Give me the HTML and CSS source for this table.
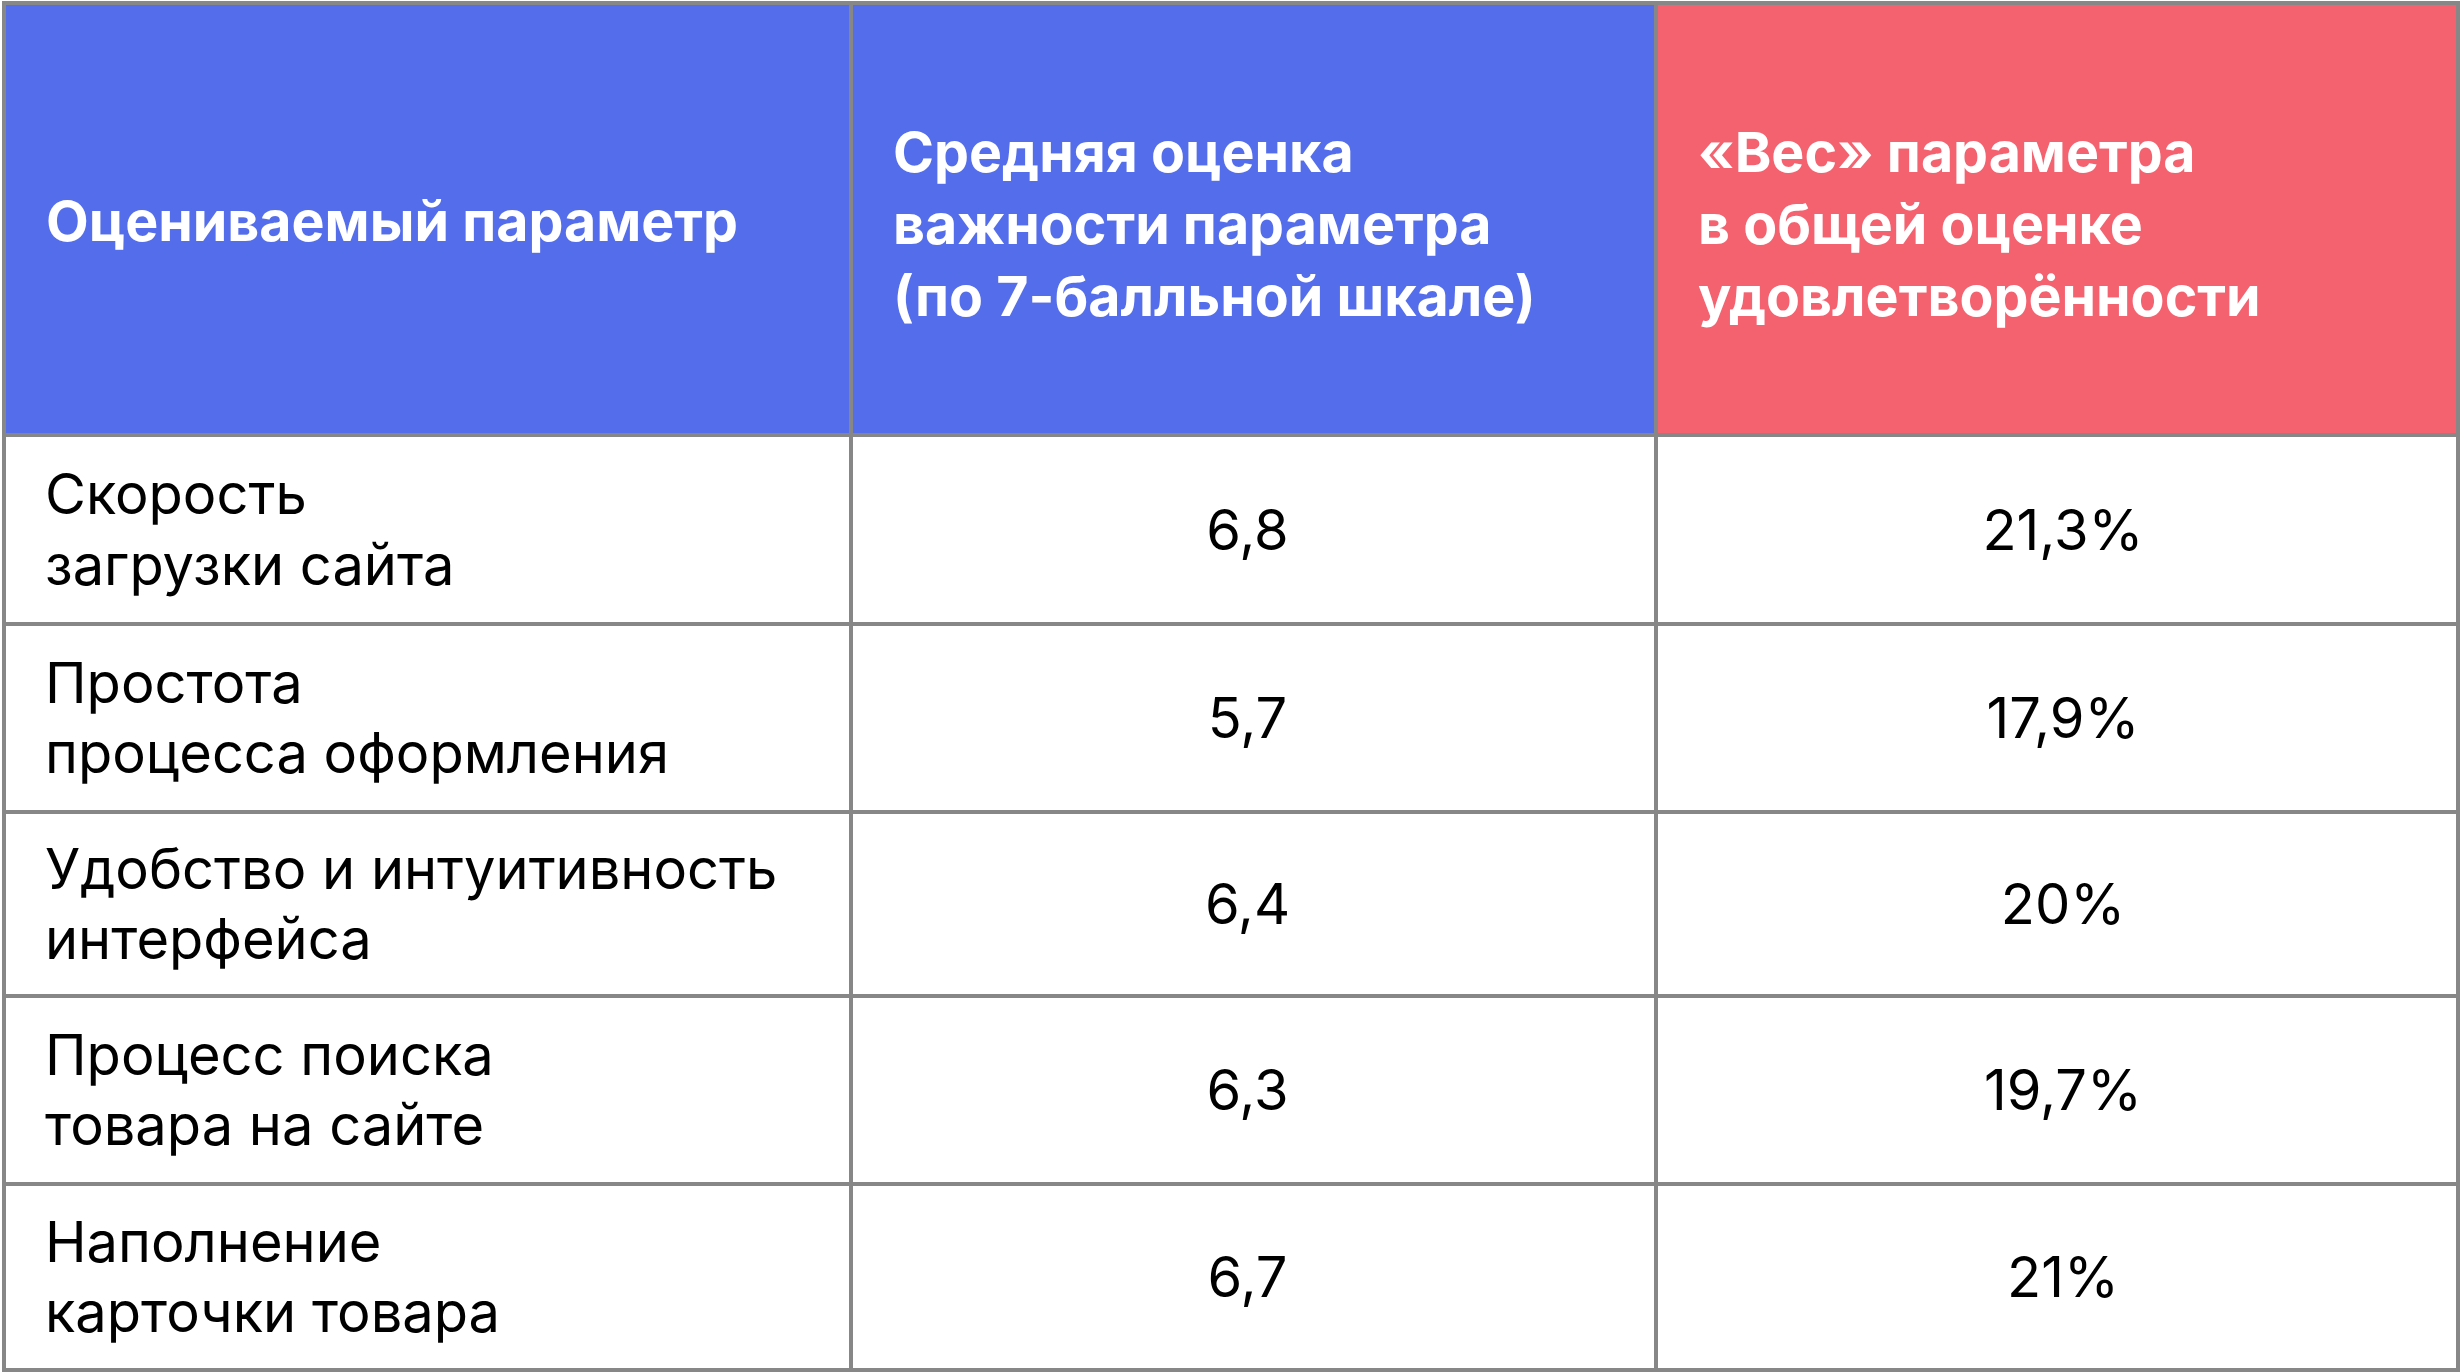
FILE: index.html
```html
<!DOCTYPE html>
<html lang="ru">
<head>
<meta charset="utf-8">
<title>Оценка параметров</title>
<link rel="stylesheet" href="styles.css">
</head>
<body>
<div class="page">
  <div class="grid">
    <div class="cell head blue single">Оцениваемый параметр</div>
    <div class="cell head blue multi">Средняя оценка<br>важности параметра<br>(по 7-балльной шкале)</div>
    <div class="cell head red multi">«Вес» параметра<br>в общей оценке<br>удовлетворённости</div>

    <div class="cell name">Скорость<br>загрузки сайта</div>
    <div class="cell num mid">6,8</div>
    <div class="cell num last">21,3%</div>

    <div class="cell name">Простота<br>процесса оформления</div>
    <div class="cell num mid">5,7</div>
    <div class="cell num last">17,9%</div>

    <div class="cell name">Удобство и интуитивность<br>интерфейса</div>
    <div class="cell num mid">6,4</div>
    <div class="cell num last">20%</div>

    <div class="cell name">Процесс поиска<br>товара на сайте</div>
    <div class="cell num mid">6,3</div>
    <div class="cell num last">19,7%</div>

    <div class="cell name">Наполнение<br>карточки товара</div>
    <div class="cell num mid">6,7</div>
    <div class="cell num last">21%</div>
  </div>
</div>
</body>
</html>
```

FILE: styles.css
```css
html, body {
  margin: 0;
  padding: 0;
  background: #ffffff;
}

.page {
  padding: 1px 0 0 2px;
  font-family: "Inter", "Noto Sans", sans-serif;
}

.grid {
  display: grid;
  grid-template-columns: 847px 805px 802px;
  grid-template-rows: 432px 189px 188px 184px 188px 186px;
  border-left: 4px solid #878787;
  border-top: 4px solid #878787;
  width: 2454px;
}

.cell {
  box-sizing: border-box;
  border-right: 4px solid #878787;
  border-bottom: 4px solid #878787;
  padding: 0 40px;
  display: flex;
  align-items: center;
}

.head {
  color: #ffffff;
  font-weight: 700;
  font-size: 55.5px;
  line-height: 72px;
}

.head.single {
  padding-top: 3px;
}

.head.multi {
  padding-top: 9px;
}

.blue {
  background: #546deb;
}

.red {
  background: #f4616f;
}

.name {
  color: #000000;
  font-size: 56px;
  line-height: 70.5px;
  font-weight: 400;
  padding-left: 39px;
}

.num {
  color: #000000;
  font-size: 56px;
  line-height: 70px;
  justify-content: center;
}

.num.mid {
  padding: 0 52px 0 40px;
}

.num.last {
  padding: 0 28px 0 40px;
}
```
